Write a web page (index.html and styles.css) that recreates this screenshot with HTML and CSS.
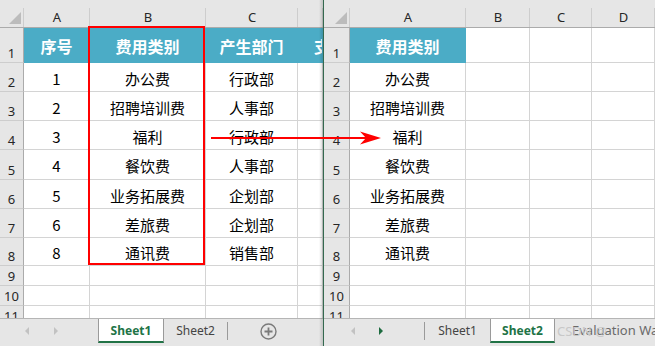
FILE: index.html
```html
<!DOCTYPE html>
<html lang="zh-CN">
<head>
  <meta charset="UTF-8" />
  <title>费用类别</title>
  <link rel="stylesheet" href="styles.css">
</head>
<body>
<div class="window">

  <section class="pane pane-left">
    <div class="sheet">
      <div class="corner"></div><div class="hd">A</div><div class="hd">B</div><div class="hd">C</div><div class="hd"></div>
      <div class="rh">1</div><div class="c t">序号</div><div class="c t">费用类别</div><div class="c t">产生部门</div><div class="c t clip">支出</div>
      <div class="rh">2</div><div class="c">1</div><div class="c">办公费</div><div class="c">行政部</div><div class="c"></div>
      <div class="rh">3</div><div class="c">2</div><div class="c">招聘培训费</div><div class="c">人事部</div><div class="c"></div>
      <div class="rh">4</div><div class="c">3</div><div class="c">福利</div><div class="c">行政部</div><div class="c"></div>
      <div class="rh">5</div><div class="c">4</div><div class="c">餐饮费</div><div class="c">人事部</div><div class="c"></div>
      <div class="rh">6</div><div class="c">5</div><div class="c">业务拓展费</div><div class="c">企划部</div><div class="c"></div>
      <div class="rh">7</div><div class="c">6</div><div class="c">差旅费</div><div class="c">企划部</div><div class="c"></div>
      <div class="rh">8</div><div class="c">8</div><div class="c">通讯费</div><div class="c">销售部</div><div class="c"></div>
      <div class="rh">9</div><div class="c"></div><div class="c"></div><div class="c"></div><div class="c"></div>
      <div class="rh">10</div><div class="c"></div><div class="c"></div><div class="c"></div><div class="c"></div>
      <div class="rh">11</div><div class="c"></div><div class="c"></div><div class="c"></div><div class="c"></div>
    </div>
    <div class="tabs">
      <div class="nav nav-left"><span class="tri-l"></span><span class="tri-r"></span></div>
      <div class="tab on w66">Sheet1</div>
      <div class="tab w63">Sheet2</div>
      <span class="sep"></span>
      <svg class="plus" width="17" height="17" viewBox="0 0 17 17">
        <circle cx="8.5" cy="8.5" r="7.5" fill="none" stroke="#7a7a7a" stroke-width="1.4"/>
        <path d="M8.5 4.5v8M4.5 8.5h8" stroke="#7a7a7a" stroke-width="1.8"/>
      </svg>
    </div>
  </section>

  <div class="split"></div>

  <section class="pane pane-right">
    <div class="sheet">
      <div class="corner"></div><div class="hd">A</div><div class="hd">B</div><div class="hd">C</div><div class="hd">D</div>
      <div class="rh">1</div><div class="c t">费用类别</div><div class="c"></div><div class="c"></div><div class="c"></div>
      <div class="rh">2</div><div class="c">办公费</div><div class="c"></div><div class="c"></div><div class="c"></div>
      <div class="rh">3</div><div class="c">招聘培训费</div><div class="c"></div><div class="c"></div><div class="c"></div>
      <div class="rh">4</div><div class="c">福利</div><div class="c"></div><div class="c"></div><div class="c"></div>
      <div class="rh">5</div><div class="c">餐饮费</div><div class="c"></div><div class="c"></div><div class="c"></div>
      <div class="rh">6</div><div class="c">业务拓展费</div><div class="c"></div><div class="c"></div><div class="c"></div>
      <div class="rh">7</div><div class="c">差旅费</div><div class="c"></div><div class="c"></div><div class="c"></div>
      <div class="rh">8</div><div class="c">通讯费</div><div class="c"></div><div class="c"></div><div class="c"></div>
      <div class="rh">9</div><div class="c"></div><div class="c"></div><div class="c"></div><div class="c"></div>
      <div class="rh">10</div><div class="c"></div><div class="c"></div><div class="c"></div><div class="c"></div>
      <div class="rh">11</div><div class="c"></div><div class="c"></div><div class="c"></div><div class="c"></div>
    </div>
    <div class="tabs">
      <div class="nav nav-right"><span class="tri-l"></span><span class="tri-r go"></span></div>
      <span class="sep"></span>
      <div class="tab w65">Sheet1</div>
      <div class="tab on w65">Sheet2</div>
      <div class="tab more"><span class="mark">CSDN @</span>Evaluation Warning</div>
    </div>
  </section>

  <div class="highlight"></div>
  <svg class="pointer" width="655" height="346" viewBox="0 0 655 346">
    <path d="M211 138H366" stroke="#f00" stroke-width="2"/>
    <path d="M381 138L360 131.5L366 138L360 144.5Z" fill="#f00"/>
  </svg>
</div>
</body>
</html>
```

FILE: styles.css
```css
body {
  margin: 0;
  background: #fff;
  font-family: "Noto Sans", "Noto Sans CJK SC", sans-serif;
}
.window {
  position: relative;
  display: flex;
  width: 655px;
  height: 346px;
  overflow: hidden;
}
.pane {
  position: relative;
  display: flex;
  flex-direction: column;
}
.pane-left {
  width: 323px;
}
.pane-left::after {
  content: "";
  position: absolute;
  top: 0;
  right: 0;
  width: 4px;
  height: 100%;
  background: linear-gradient(to right, rgba(0, 0, 0, 0), rgba(0, 0, 0, 0.16));
}
.pane-right {
  width: 331px;
}
.split {
  width: 1px;
  background: #34694f;
}

/* grid */
.sheet {
  display: grid;
  grid-template-rows: 28px 35px 29px 29px 29px 30px 29px 29px 28px 20px 20px 20px;
  height: 318px;
  overflow: hidden;
}
.pane-left .sheet {
  grid-template-columns: 24px 66px 116px 92px 25px;
}
.pane-right .sheet {
  grid-template-columns: 26px 116px 64px 62px 63px;
}
.sheet > div {
  box-sizing: border-box;
  display: flex;
  align-items: center;
  justify-content: center;
  overflow: hidden;
  white-space: nowrap;
}
.corner,
.hd {
  position: relative;
  background: linear-gradient(#cdcdcd, #cdcdcd) right bottom / 1px 19px no-repeat, #e6e6e6;
  border-bottom: 1px solid #ababab;
}
.corner::after {
  content: "";
  position: absolute;
  right: 3px;
  bottom: 3px;
  border-left: 12px solid transparent;
  border-bottom: 12px solid #bcbcbc;
}
.hd {
  align-items: flex-end !important;
  padding-bottom: 2px;
  font-size: 13px;
  line-height: 16px;
  color: #262626;
}
.rh {
  align-items: flex-end !important;
  padding-bottom: 1px;
  background: #e6e6e6;
  border-right: 1px solid #ababab;
  border-bottom: 1px solid #cdcdcd;
  font-size: 13px;
  line-height: 16px;
  color: #262626;
}
.c {
  padding-top: 2px;
  border-right: 1px solid #d4d4d4;
  border-bottom: 1px solid #d4d4d4;
  font-family: "Noto Sans CJK SC", sans-serif;
  font-size: 15px;
  color: #000;
}
.c.t {
  background: #4bacc6;
  border-color: #4bacc6;
  color: #fff;
  font-weight: bold;
  font-size: 16px;
}
.c.clip {
  justify-content: flex-start;
  padding-left: 16px;
}

/* sheet tabs */
.tabs {
  display: flex;
  align-items: flex-start;
  height: 28px;
  box-sizing: border-box;
  border-top: 1px solid #b5b5b5;
  background: #e6e6e6;
  font-size: 12px;
  color: #444;
  white-space: nowrap;
}
.nav {
  display: flex;
  align-items: center;
  height: 24px;
}
.nav-left {
  width: 98px;
  padding-left: 25px;
  gap: 25px;
  box-sizing: border-box;
}
.nav-right {
  width: 100px;
  padding-left: 27px;
  gap: 24px;
  box-sizing: border-box;
}
.tri-l,
.tri-r {
  width: 0;
  height: 0;
  border-top: 4px solid transparent;
  border-bottom: 4px solid transparent;
}
.tri-l {
  border-right: 4px solid #c2c2c2;
}
.tri-r {
  border-left: 4px solid #c2c2c2;
}
.tri-r.go {
  border-left-color: #1d6b3f;
}
.tab {
  display: flex;
  align-items: center;
  justify-content: center;
  height: 24px;
  box-sizing: border-box;
  padding-bottom: 2px;
}
.tab.on {
  background: #fff;
  border-left: 1px solid #9a9a9a;
  border-right: 1px solid #9a9a9a;
  border-bottom: 2px solid #217346;
  padding-bottom: 0;
  color: #217346;
  font-weight: bold;
}
.w63 { width: 63px; }
.w65 { width: 65px; }
.w66 { width: 66px; }
.sep {
  width: 1px;
  height: 18px;
  margin-top: 3px;
  background: #9a9a9a;
}
.plus {
  margin: 4px 0 0 32px;
}
.tab.more {
  position: relative;
  flex: 1;
  min-width: 0;
  overflow: hidden;
  justify-content: flex-start;
  padding-left: 17px;
  font-size: 13px;
  color: #6a6a6a;
}
.mark {
  position: absolute;
  left: 2px;
  top: 3px;
  color: #c8c8c8;
}

/* annotations drawn over the sheets */
.highlight {
  position: absolute;
  left: 88px;
  top: 26px;
  width: 117px;
  height: 239px;
  box-sizing: border-box;
  border: 2px solid #f00;
}
.pointer {
  position: absolute;
  left: 0;
  top: 0;
  pointer-events: none;
}
```
